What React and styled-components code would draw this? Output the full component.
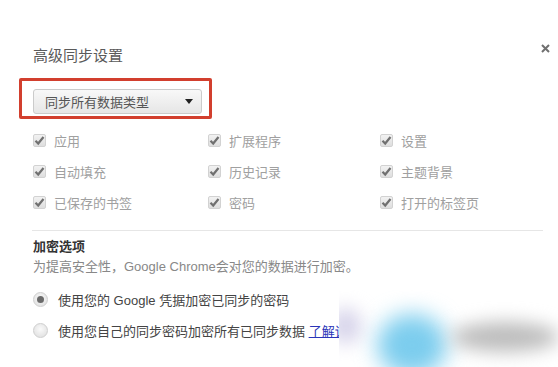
import React from 'react';
import styled, { createGlobalStyle } from 'styled-components';

const GlobalStyle = createGlobalStyle`
  html, body {
    margin: 0;
    padding: 0;
    background: #fff;
  }
  body {
    font-family: "Liberation Sans", "Noto Sans CJK SC", sans-serif;
    -webkit-font-smoothing: antialiased;
  }
`;

const Page = styled.div`
  position: relative;
  width: 558px;
  height: 367px;
  overflow: hidden;
  padding: 44px 0 0 33px;
  box-sizing: border-box;
`;

const Header = styled.div`
  display: flex;
  align-items: flex-start;
  justify-content: space-between;
  width: 518px;
`;

const Title = styled.div`
  font-size: 15px;
  line-height: 22px;
  color: #5a5a5a;
  font-family: "Noto Sans CJK SC", sans-serif;
`;

const Close = styled.button`
  margin-top: -2px;
  padding: 0;
  border: 0;
  background: none;
  width: 12px;
  height: 12px;
  display: flex;
  align-items: center;
  justify-content: center;
`;

const Highlight = styled.div`
  margin: 12px 0 0 -14px;
  width: 193px;
  height: 41px;
  box-sizing: border-box;
  border: 3px solid #d23f2e;
  border-radius: 2px;
  padding: 8px 7px 2px 11px;
`;

const Select = styled.div`
  height: 25px;
  box-sizing: border-box;
  border: 1px solid #cbcbcb;
  border-radius: 3px;
  background: linear-gradient(#f8f8f8, #e6e6e6);
  display: flex;
  align-items: center;
  justify-content: space-between;
  padding: 0 8px 0 11px;
  font-size: 13px;
  color: #555;
  font-family: "Noto Sans CJK SC", sans-serif;
`;

const Arrow = styled.span`
  width: 0;
  height: 0;
  border-left: 4px solid transparent;
  border-right: 4px solid transparent;
  border-top: 5px solid #222;
`;

const Grid = styled.div`
  margin-top: 6px;
  display: grid;
  grid-template-columns: 175px 172px auto;
  grid-auto-rows: 31px;
  align-items: center;
`;

const CheckItem = styled.label`
  display: flex;
  align-items: center;
  gap: 8px;
  font-size: 13px;
  color: #a0a0a0;
  font-family: "Noto Sans CJK SC", sans-serif;
`;

const Box = styled.span`
  width: 13px;
  height: 13px;
  box-sizing: border-box;
  border: 1px solid #d2d2d2;
  border-radius: 2px;
  background: linear-gradient(#f2f2f2, #dedede);
  display: flex;
  align-items: center;
  justify-content: center;
`;

const Divider = styled.div`
  margin: 12px 0 0 -1px;
  width: 511px;
  height: 1px;
  background: #e6e6e6;
`;

const SectionTitle = styled.div`
  margin-top: 5px;
  font-size: 13px;
  line-height: 20px;
  font-weight: bold;
  color: #333;
  font-family: "Noto Sans CJK SC", sans-serif;
`;

const Desc = styled.div`
  font-size: 13px;
  line-height: 22px;
  color: #888;
  font-family: "Liberation Sans", "Noto Sans CJK SC", sans-serif;
`;

const Radios = styled.div`
  margin-top: 6px;
  display: flex;
  flex-direction: column;
`;

const RadioRow = styled.label`
  height: 31px;
  display: flex;
  align-items: center;
  gap: 10px;
  font-size: 13px;
  color: #444;
  font-family: "Liberation Sans", "Noto Sans CJK SC", sans-serif;
  white-space: nowrap;
`;

const Radio = styled.span`
  width: 15px;
  height: 15px;
  box-sizing: border-box;
  border-radius: 50%;
  border: 1px solid #cfcfcf;
  background: radial-gradient(circle at 50% 40%, #fafafa, #dcdcdc);
  display: flex;
  align-items: center;
  justify-content: center;
  &::after {
    content: '';
    width: 7px;
    height: 7px;
    border-radius: 50%;
    background: ${(p) => (p.checked ? '#6a6a6a' : 'transparent')};
  }
`;

const Link = styled.a`
  color: #2a35b8;
  text-decoration: underline;
`;

const Watermark = styled.div`
  position: absolute;
  left: 339px;
  top: 290px;
  width: 219px;
  height: 77px;
  background: #fff;
  overflow: hidden;
`;

const Blob = styled.div`
  position: absolute;
  border-radius: 50%;
  filter: blur(${(p) => p.blur}px);
  background: ${(p) => p.color};
`;

const checks = [
  '应用', '扩展程序', '设置',
  '自动填充', '历史记录', '主题背景',
  '已保存的书签', '密码', '打开的标签页',
];

function Tick() {
  return (
    <svg width="11" height="11" viewBox="0 0 11 11">
      <path d="M1.5 5.8 L4.2 8.5 L9.5 2" fill="none" stroke="#707070" strokeWidth="2.2" />
    </svg>
  );
}

export default function App() {
  return (
    <>
      <GlobalStyle />
      <Page>
        <Header>
          <Title>高级同步设置</Title>
          <Close>
            <svg width="9" height="9" viewBox="0 0 9 9">
              <path d="M1 1 L8 8 M8 1 L1 8" stroke="#707070" strokeWidth="2" />
            </svg>
          </Close>
        </Header>
        <Highlight>
          <Select>
            同步所有数据类型
            <Arrow />
          </Select>
        </Highlight>
        <Grid>
          {checks.map((c) => (
            <CheckItem key={c}>
              <Box><Tick /></Box>
              {c}
            </CheckItem>
          ))}
        </Grid>
        <Divider />
        <SectionTitle>加密选项</SectionTitle>
        <Desc>为提高安全性，Google Chrome会对您的数据进行加密。</Desc>
        <Radios>
          <RadioRow>
            <Radio checked />
            使用您的 Google 凭据加密已同步的密码
          </RadioRow>
          <RadioRow>
            <Radio />
            <span>使用您自己的同步密码加密所有已同步数据 <Link>了解详情</Link></span>
          </RadioRow>
        </Radios>
        <Watermark>
          <Blob color="#d6d3ea" blur={9} style={{ left: -8, top: 18, width: 30, height: 36 }} />
          <Blob color="#7ccdee" blur={11} style={{ left: 38, top: 24, width: 70, height: 62 }} />
          <Blob color="#bdbdbd" blur={9} style={{ left: 112, top: 32, width: 108, height: 30 }} />
        </Watermark>
      </Page>
    </>
  );
}
